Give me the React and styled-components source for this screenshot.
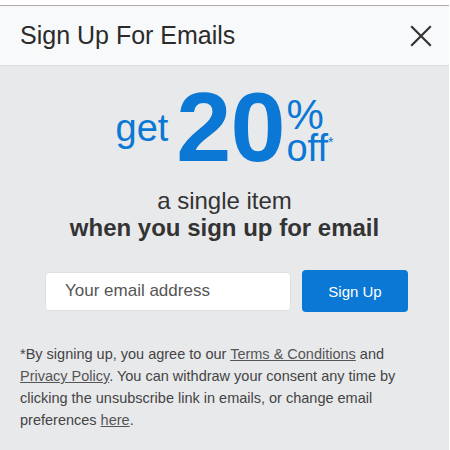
import React from 'react';
import styled, { createGlobalStyle } from 'styled-components';

const GlobalStyle = createGlobalStyle`
  html, body {
    margin: 0;
    padding: 0;
    background: #ffffff;
  }
  body {
    font-family: "Liberation Sans", Arial, sans-serif;
  }
`;

const Page = styled.div`
  width: 450px;
  height: 450px;
  padding-top: 5px;
  box-sizing: border-box;
`;

const Modal = styled.div`
  border-top: 1px solid #b9a6aa;
  width: 449px;
  display: flex;
  flex-direction: column;
`;

const Header = styled.div`
  height: 59px;
  display: flex;
  align-items: center;
  justify-content: space-between;
  padding: 0 16px 0 20px;
  background: #f8f9fa;
  border-bottom: 1px solid #dcdddf;
`;

const Title = styled.h2`
  margin: 0;
  font-size: 25px;
  font-weight: 400;
  color: #2b2b2b;
`;

const CloseButton = styled.button`
  border: 0;
  background: none;
  padding: 0;
  width: 24px;
  height: 24px;
  display: flex;
  align-items: center;
  justify-content: center;
  cursor: pointer;
`;

const Body = styled.div`
  background: #e8e9eb;
  height: 378px;
  padding: 11px 20px 0;
  display: flex;
  flex-direction: column;
  align-items: center;
`;

const Offer = styled.div`
  color: #0a78d4;
  line-height: 1;
  white-space: nowrap;
  text-align: center;
`;

const Get = styled.span`
  font-size: 38px;
  vertical-align: 20px;
  margin-right: 8px;
`;

const Big = styled.span`
  font-size: 99px;
  font-weight: 700;
  letter-spacing: -1px;
  margin-right: 2px;
`;

const Stack = styled.span`
  display: inline-block;
  text-align: left;
`;

const Pct = styled.span`
  display: block;
  font-size: 42px;
  line-height: 16px;
`;

const Off = styled.span`
  display: block;
  font-size: 38px;
  line-height: 38px;
`;

const Star = styled.sup`
  font-size: 14px;
  vertical-align: 14px;
`;

const Tagline = styled.p`
  margin: 11px 0 0;
  text-align: center;
  color: #333333;
  font-size: 24px;
  line-height: 27px;

  strong {
    display: block;
  }
`;

const Form = styled.form`
  margin: 29px 0 0 4px;
  display: flex;
  align-items: center;
  gap: 11px;
`;

const EmailInput = styled.input`
  width: 246px;
  height: 39px;
  box-sizing: border-box;
  border: 1px solid #dfe0e2;
  border-radius: 4px;
  background: #ffffff;
  padding: 0 19px;
  font-family: inherit;
  font-size: 17px;
  color: #333;

  &::placeholder {
    color: #555555;
  }
`;

const SubmitButton = styled.button`
  width: 106px;
  height: 42px;
  border: 0;
  border-radius: 4px;
  background: #0a78d4;
  color: #ffffff;
  font-family: inherit;
  font-size: 15px;
  cursor: pointer;
`;

const Disclaimer = styled.p`
  align-self: stretch;
  margin: 31px 0 0;
  font-size: 14.5px;
  line-height: 22px;
  color: #444444;

  a {
    color: #555555;
    text-decoration: underline;
  }
`;

function CloseIcon() {
  return (
    <svg width="22" height="22" viewBox="0 0 22 22" fill="none">
      <path d="M2 2 L20 20 M20 2 L2 20" stroke="#333" strokeWidth="2.2" strokeLinecap="square" />
    </svg>
  );
}

export default function App() {
  return (
    <Page>
      <GlobalStyle />
      <Modal>
        <Header>
          <Title>Sign Up For Emails</Title>
          <CloseButton aria-label="Close">
            <CloseIcon />
          </CloseButton>
        </Header>
        <Body>
          <Offer>
            <Get>get</Get>
            <Big>20</Big>
            <Stack>
              <Pct>%</Pct>
              <Off>off<Star>*</Star></Off>
            </Stack>
          </Offer>
          <Tagline>
            a single item
            <strong>when you sign up for email</strong>
          </Tagline>
          <Form onSubmit={(e) => e.preventDefault()}>
            <EmailInput type="email" placeholder="Your email address" />
            <SubmitButton type="submit">Sign Up</SubmitButton>
          </Form>
          <Disclaimer>
            *By signing up, you agree to our <a href="#terms">Terms &amp; Conditions</a> and{' '}
            <a href="#privacy">Privacy Policy</a>. You can withdraw your consent any time by
            clicking the unsubscribe link in emails, or change email preferences{' '}
            <a href="#prefs">here</a>.
          </Disclaimer>
        </Body>
      </Modal>
    </Page>
  );
}
